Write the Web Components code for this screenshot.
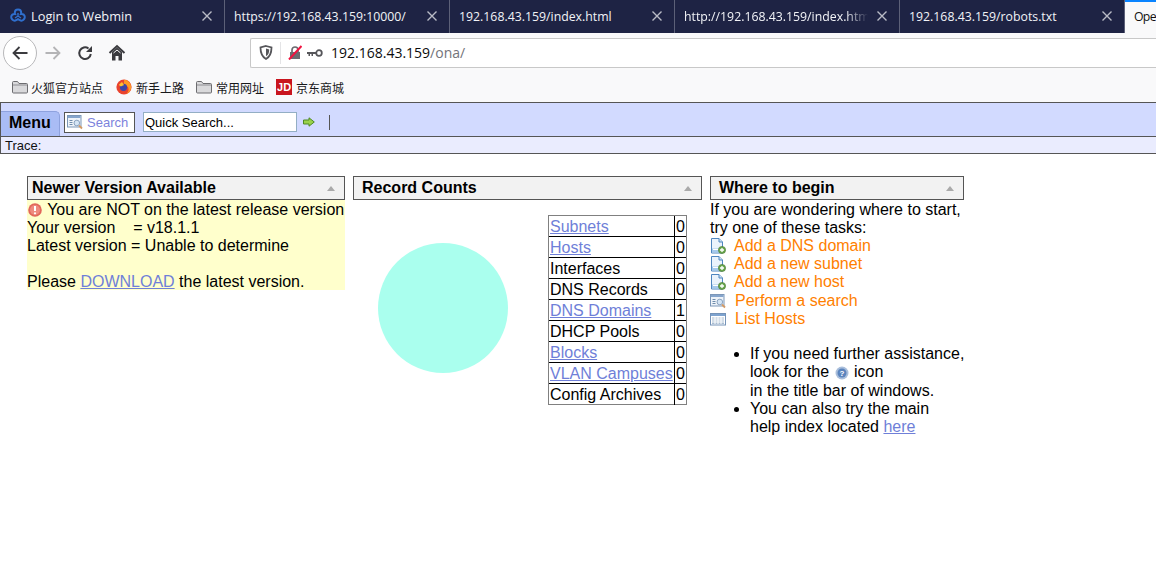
<!DOCTYPE html>
<html>
<head>
<meta charset="utf-8">
<title>OpenNetAdmin</title>
<style>
  html, body { margin: 0; padding: 0; background: #fff; overflow: hidden; }
  body { font-family: "Liberation Sans", Arial, sans-serif; font-size: 16px; color: #000; }
  .panels { display: flex; gap: 8px; padding: 22px 0 0 27px; align-items: flex-start; }
</style>
</head>
<body>
<browser-tabs>
  <browser-tab icon>Login to Webmin</browser-tab>
  <browser-tab>https://192.168.43.159:10000/</browser-tab>
  <browser-tab>192.168.43.159/index.html</browser-tab>
  <browser-tab fade>http://192.168.43.159/index.html</browser-tab>
  <browser-tab>192.168.43.159/robots.txt</browser-tab>
  <browser-tab active>Ope</browser-tab>
</browser-tabs>
<nav-bar></nav-bar>
<bookmark-bar></bookmark-bar>
<ona-menubar></ona-menubar>
<ona-trace></ona-trace>
<div class="panels">
  <ona-panel title="Newer Version Available" width="318" pad="5"><version-box></version-box></ona-panel>
  <ona-panel title="Record Counts" width="349" pad="9"><record-counts></record-counts></ona-panel>
  <ona-panel title="Where to begin" width="254" pad="9"><where-begin></where-begin></ona-panel>
</div>

<script>
const SEARCH_ICON = `<svg width="16" height="16" viewBox="0 0 16 16"><rect x=".5" y="1.500" width="13.500" height="11.500" fill="#eef3f9" stroke="#7c97b8"/><rect x="1" y="2" width="12.500" height="2" fill="#86a5cc"/><path d="M2.500 6.500h3M2.500 8.500h3M2.500 10.500h3" stroke="#6f8cab"/><circle cx="9.800" cy="9" r="2.800" fill="#d5e5f5" stroke="#8aa3bf"/><path d="M12 11.500l3 3" stroke="#d29a66" stroke-width="1.800"/></svg>`;
const ADD_ICON = `<svg width="16" height="16" viewBox="0 0 16 16"><path d="M1.500.5h7.500l3.500 3.500v11h-11z" fill="#eaf3fc" stroke="#4f86c0"/><path d="M2 10.500h10v4h-10z" fill="#a5c9ec"/><path d="M3 11.500h6" stroke="#fff"/><path d="M9 .5v3.500h3.500" fill="#cfe2f5" stroke="#4f86c0"/><circle cx="12" cy="12" r="3.600" fill="#6aa84f" stroke="#47762f" stroke-width=".6"/><path d="M10 12h4M12 10v4" stroke="#fff" stroke-width="1.300"/></svg>`;
const LIST_ICON = `<svg width="16" height="16" viewBox="0 0 16 16"><rect x=".5" y="2.500" width="15" height="11.500" fill="#fff" stroke="#7493b8"/><rect x="1" y="3" width="14" height="2" fill="#7ea3cf"/><path d="M2 7h12M2 9h12M2 11h12M2 12.500h12" stroke="#9db4cc" stroke-width=".9"/><path d="M5 6v7M8 6v7M11 6v7" stroke="#fff"/></svg>`;

class BrowserTabs extends HTMLElement {
  constructor() {
    super();
    this.attachShadow({ mode: 'open' }).innerHTML = `
    <style>
      :host { display: flex; height: 33px; background: #1e2344; overflow: hidden; }
    </style>
    <slot></slot>`;
  }
}

class BrowserTab extends HTMLElement {
  constructor() {
    super();
    const icon = this.hasAttribute('icon') ? `<svg class="fav" width="16" height="17" viewBox="0 0 16 17"><path d="M8 1.500c2 0 3.200 1.500 3.200 3.300 0 .5 0 .8-.2 1.200 2-.3 3.800 1 3.800 3 0 1.200-.4 2-1.300 2.800-1 .9-2.600 1-3.700.4L8 11.200l-1.800 1c-1.100.6-2.700.5-3.700-.4C1.600 11 1.200 10.200 1.200 9c0-2 1.800-3.300 3.800-3-.2-.4-.2-.7-.2-1.200C4.800 3 6 1.500 8 1.500z" fill="none" stroke="#2f6fce" stroke-width="2"/><path d="M8 5v4M5 10l3-2 3 2" fill="none" stroke="#2f6fce" stroke-width="1.400"/></svg>` : '';
    this.attachShadow({ mode: 'open' }).innerHTML = `
    <style>
      :host { display: flex; box-sizing: border-box; width: 225px; flex: none; height: 33px; align-items: center; padding: 0 11px 1px 9px; color: #f2f3f7; font: 12.300px "Open Sans", "Noto Sans", sans-serif; border-right: 1px solid #5c6078; }
      :host([icon]) { font-size: 12.800px; padding-left: 10px; }
      :host([active]) { width: 31px; background: #f9f9fa; color: #111; border-right: 0; border-top: 2px solid #0a84ff; padding: 0 0 3px 9px; letter-spacing: -.7px; }
      .fav { margin-right: 5px; flex: none; }
      .label { flex: 1; white-space: nowrap; overflow: hidden; min-width: 0; }
      :host([fade]) .label { -webkit-mask-image: linear-gradient(to right, #000 88%, transparent); mask-image: linear-gradient(to right, #000 88%, transparent); }
      svg.x { flex: none; margin-left: 8px; }
      :host([active]) svg.x { display: none; }
    </style>
    ${icon}<span class="label"><slot></slot></span>
    <svg class="x" width="12" height="12" viewBox="0 0 12 12"><path d="M1.500 1.500l9 9M10.500 1.500l-9 9" stroke="#b9bbc6" stroke-width="1.400"/></svg>`;
  }
}

class NavBar extends HTMLElement {
  constructor() {
    super();
    this.attachShadow({ mode: 'open' }).innerHTML = `
    <style>
      :host { display: flex; align-items: center; height: 39px; box-sizing: border-box; background: #f9f9fa; padding: 1px 0 0 3px; }
      .back { width: 34px; height: 34px; box-sizing: border-box; border: 1px solid #b8b8ba; border-radius: 50%; background: #fff; display: flex; align-items: center; justify-content: center; flex: none; }
      .btn { width: 32px; display: flex; justify-content: center; flex: none; }
      .url { margin-left: 117px; flex: 1; height: 30px; box-sizing: border-box; background: #fff; border: 1px solid #c8c8c8; border-right: 0; display: flex; align-items: center; padding: 0 0 1px 8px; font: 14px "Open Sans", "Noto Sans", sans-serif; color: #0c0c0d; border-radius: 2px 0 0 2px; }
      .sep { width: 1px; height: 22px; background: #e4e4e6; margin: 0 7px; }
      .path { color: #73737a; }
      .key { margin: 0 8px 0 5px; }
    </style>
    <div class="back"><svg width="18" height="18" viewBox="0 0 18 18"><path d="M16.500 9H2.500M8.500 3L2.500 9l6 6" fill="none" stroke="#3b3b3f" stroke-width="1.800"/></svg></div>
    <div class="btn"><svg width="18" height="18" viewBox="0 0 18 18"><path d="M1.500 9h14M9.500 3l6 6-6 6" fill="none" stroke="#b4b4b6" stroke-width="1.800"/></svg></div>
    <div class="btn"><svg width="16" height="16" viewBox="0 0 16 16"><path d="M13.800 9a5.800 5.800 0 1 1-2.300-5.500" fill="none" stroke="#3b3b3f" stroke-width="2"/><path d="M15 1v6h-6z" fill="#3b3b3f"/></svg></div>
    <div class="btn"><svg width="18" height="18" viewBox="0 0 18 18"><path d="M1.500 9L9 2l7.500 7" fill="none" stroke="#3b3b3f" stroke-width="2"/><path d="M4 8l5-4.500L14 8v8.500h-3.500V12h-3v4.500H4z" fill="#3b3b3f"/><path d="M5.500 9L9 6l3.500 3" fill="none" stroke="#f9f9fa" stroke-width="1"/></svg></div>
    <div class="url">
      <svg width="14" height="15" viewBox="0 0 14 15"><path d="M7 1l5.500 1.500c0 5-1 9-5.500 11.500C2.500 11.500 1.500 7.500 1.500 2.500z" fill="none" stroke="#56565a" stroke-width="1.800"/><path d="M7 3.500l3.200.9c0 3-.7 5.200-3.200 6.900z" fill="#56565a"/></svg>
      <span class="sep"></span>
      <svg width="14" height="15" viewBox="0 0 14 15"><path d="M2 7h10v7H2z" fill="#6b6b70"/><path d="M4 7V5a3 3 0 0 1 6 0v2" fill="none" stroke="#6b6b70" stroke-width="1.700"/><path d="M1 14.500L13.500 1" stroke="#f01440" stroke-width="2"/></svg>
      <svg class="key" width="16" height="10" viewBox="0 0 16 10"><circle cx="12" cy="5" r="2.800" fill="none" stroke="#56565a" stroke-width="1.800"/><path d="M0 4h9.500v2H6v2H4.500V6H3v2H1.500V6H0z" fill="#56565a"/></svg>
      <span>192.168.43.159<span class="path">/ona/</span></span>
    </div>`;
  }
}

class BookmarkBar extends HTMLElement {
  constructor() {
    super();
    const folder = `<svg width="16" height="14" viewBox="0 0 16 14"><path d="M.5 2.500a1 1 0 0 1 1-1h4l1.500 2h7.500a1 1 0 0 1 1 1v7.500a1 1 0 0 1-1 1h-13a1 1 0 0 1-1-1z" fill="#d9d9db" stroke="#6d6d70"/><path d="M1 5h14" stroke="#8e8e92"/></svg>`;
    this.attachShadow({ mode: 'open' }).innerHTML = `
    <style>
      :host { display: flex; align-items: center; height: 30px; box-sizing: border-box; background: #f9f9fa; padding: 0 0 0 12px; font: 12px "Noto Sans CJK SC", "Noto Sans", sans-serif; color: #18181a; }
      .b { display: flex; align-items: center; gap: 4px; margin-right: 12px; white-space: nowrap; }
      .b.first { gap: 3px; margin-right: 13px; }
      .jd { width: 16px; height: 16px; background: #c9151e; color: #fff; font: bold 11px "Liberation Sans", sans-serif; display: flex; align-items: center; justify-content: center; }
    </style>
    <div class="b first">${folder}<span>火狐官方站点</span></div>
    <div class="b"><svg width="16" height="16" viewBox="0 0 16 16"><circle cx="8" cy="8" r="7.600" fill="#e9432e"/><path d="M8 .8a7.200 7.200 0 0 1 7.200 7.200c0 3-2 6-5 7 2-2 3-4 2-6.500-1-2-3-2.500-5-2.300 1-2.500 1-4 .8-5.400z" fill="#ff9a24"/><circle cx="7.500" cy="8.300" r="3.600" fill="#3b46a8"/><path d="M3 5.500c1 3 3 1.500 5 .5l-2-3z" fill="#ffc02e"/></svg><span>新手上路</span></div>
    <div class="b">${folder}<span>常用网址</span></div>
    <div class="b"><span class="jd">JD</span><span>京东商城</span></div>`;
  }
}

class OnaMenubar extends HTMLElement {
  constructor() {
    super();
    this.attachShadow({ mode: 'open' }).innerHTML = `
    <style>
      :host { display: flex; align-items: flex-end; box-sizing: border-box; height: 35px; background: #d2daff; border-top: 1px solid #555; border-left: 1px solid #555; border-bottom: 1px solid #555; }
      .menu { box-sizing: border-box; width: 59px; height: 25px; background: #a9bcf5; border: 1px solid #8ea2de; border-bottom: 0; border-left: 0; border-radius: 0 5px 0 0; font: bold 16px "Liberation Sans", sans-serif; padding: 2px 0 0 8px; }
      .row { display: flex; align-items: center; align-self: center; margin-top: 5px; }
      .search { box-sizing: border-box; width: 71px; height: 21px; margin-left: 4px; background: #fff; border: 1px solid #555; display: flex; align-items: center; padding-left: 2px; gap: 4px; font: 13px "Liberation Sans", sans-serif; color: #7c82dc; }
      .q { box-sizing: border-box; width: 154px; height: 20px; margin-left: 8px; background: #fff; border: 1px solid #93aec4; font: 13px/17px "Liberation Sans", sans-serif; padding: 1px 0 0 1px; }
      .go { margin-left: 6px; }
      .bar { width: 1px; height: 15px; background: #555; margin-left: 14px; }
    </style>
    <div class="menu">Menu</div>
    <div class="row">
      <div class="search">${SEARCH_ICON}<span>Search</span></div>
      <div class="q">Quick Search...</div>
      <svg class="go" width="12" height="10" viewBox="0 0 12 10"><path d="M.5 3h5.500V.8L11.300 5 6 9.200V7H.5z" fill="#9ad24a" stroke="#4f8a22"/></svg>
      <div class="bar"></div>
    </div>`;
  }
}

class OnaTrace extends HTMLElement {
  constructor() {
    super();
    this.attachShadow({ mode: 'open' }).innerHTML = `
    <style>
      :host { display: block; box-sizing: border-box; height: 17px; background: #eaecfe; border-left: 1px solid #555; border-bottom: 1px solid #555; font: 13px/17px "Liberation Sans", sans-serif; padding-left: 4px; color: #111; }
    </style>Trace:`;
  }
}

class OnaPanel extends HTMLElement {
  constructor() {
    super();
    this.attachShadow({ mode: 'open' }).innerHTML = `
    <style>
      :host { display: block; flex: none; }
      .head { box-sizing: border-box; height: 24px; background: #f2f2f2; border: 1px solid #555; display: flex; align-items: center; justify-content: space-between; font: bold 16px "Liberation Sans", sans-serif; padding-right: 9px; }
      .tri { width: 0; height: 0; border: 4px solid transparent; border-top: 0; border-bottom: 5px solid #aaa; }
    </style>
    <div class="head"><span class="t"></span><span class="tri"></span></div>
    <slot></slot>`;
  }
  connectedCallback() {
    this.style.width = this.getAttribute('width') + 'px';
    this.shadowRoot.querySelector('.t').textContent = this.getAttribute('title');
    this.shadowRoot.querySelector('.head').style.paddingLeft = (this.getAttribute('pad') - 1) + 'px';
    this.removeAttribute('title');
  }
}

class VersionBox extends HTMLElement {
  constructor() {
    super();
    this.attachShadow({ mode: 'open' }).innerHTML = `
    <style>
      :host { display: block; box-sizing: border-box; background: #ffffcc; font: 16px/18px "Liberation Sans", sans-serif; height: 90px; padding-top: 1px; }
      .txt { white-space: pre; }
      a { color: #6f7fd8; }
      svg { vertical-align: -2px; margin: 0 1px 0 1px; }
    </style>
    <div class="txt"><svg width="14" height="14" viewBox="0 0 14 14"><circle cx="7" cy="7" r="6.800" fill="#e2675a"/><circle cx="7" cy="7" r="5" fill="#ee8a7e"/><path d="M7 3v5" stroke="#fff" stroke-width="2"/><circle cx="7" cy="10.300" r="1.100" fill="#fff"/></svg> You are NOT on the latest release version
Your version    = v18.1.1
Latest version = Unable to determine

Please <a href="#">DOWNLOAD</a> the latest version.</div>`;
  }
}

class RecordCounts extends HTMLElement {
  constructor() {
    super();
    const rows = [
      ['Subnets', 0, 1], ['Hosts', 0, 1], ['Interfaces', 0, 0], ['DNS Records', 0, 0], ['DNS Domains', 1, 1],
      ['DHCP Pools', 0, 0], ['Blocks', 0, 1], ['VLAN Campuses', 0, 1], ['Config Archives', 0, 0]
    ];
    const html = rows.map(r => `<div class="n">${r[2] ? `<a href="#">${r[0]}</a>` : r[0]}</div><div class="c">${r[1]}</div>`).join('');
    this.attachShadow({ mode: 'open' }).innerHTML = `
    <style>
      :host { display: flex; align-items: flex-start; padding: 15px 0 0 25px; }
      svg { margin-top: 28px; flex: none; }
      .tbl { margin-left: 40px; display: grid; grid-template-columns: 126px 11px; grid-auto-rows: 21px; box-sizing: border-box; width: 139px; height: 190px; border: 1px solid #808080; font: 16px/20px "Liberation Sans", sans-serif; }
      .n, .c { box-sizing: border-box; border-bottom: 1px solid #000; white-space: nowrap; padding-top: 1px; }
      .n { padding-left: 1px; border-right: 1px solid #000; }
      .c { padding-left: 1px; }
      .n:nth-last-child(2), .c:last-child { border-bottom: 0; }
      a { color: #6f7fd8; }
    </style>
    <svg width="130" height="130" viewBox="0 0 130 130"><circle cx="65" cy="65" r="65" fill="#aaffee"/></svg>
    <div class="tbl">${html}</div>`;
  }
}

class WhereBegin extends HTMLElement {
  constructor() {
    super();
    const tasks = [
      [ADD_ICON, 'Add a DNS domain', ''], [ADD_ICON, 'Add a new subnet', ''], [ADD_ICON, 'Add a new host', ''],
      [SEARCH_ICON, 'Perform a search', 'wide'], [LIST_ICON, 'List Hosts', '']
    ];
    const html = tasks.map(t => `<div class="task ${t[2]}">${t[0]}<span>${t[1]}</span></div>`).join('');
    this.attachShadow({ mode: 'open' }).innerHTML = `
    <style>
      :host { display: block; font: 16px/18px "Liberation Sans", sans-serif; padding-top: 1px; }
      .task { display: flex; align-items: center; height: 18px; color: #ff8000; gap: 8px; }
      .task.wide { margin-top: 1px; }
      .task.wide, .task.wide + .task { gap: 9px; }
      ul { margin: 17px 0 0; padding: 0 0 0 40px; white-space: nowrap; }
      a { color: #6f7fd8; }
      .help { vertical-align: -5px; margin: 0 1px 2px; }
    </style>
    If you are wondering where to start,<br>try one of these tasks:
    ${html}
    <ul>
      <li>If you need further assistance,<br>look for the <svg class="help" width="14" height="14" viewBox="0 0 14 14"><circle cx="7" cy="7" r="6.500" fill="#a9bedb"/><circle cx="7" cy="7" r="4.500" fill="#5b84bd"/><text x="7" y="10" font-size="8" font-weight="bold" font-family="Liberation Sans" text-anchor="middle" fill="#fff">?</text></svg> icon<br>in the title bar of windows.</li>
      <li>You can also try the main<br>help index located <a href="#">here</a></li>
    </ul>`;
  }
}

customElements.define('browser-tabs', BrowserTabs);
customElements.define('browser-tab', BrowserTab);
customElements.define('nav-bar', NavBar);
customElements.define('bookmark-bar', BookmarkBar);
customElements.define('ona-menubar', OnaMenubar);
customElements.define('ona-trace', OnaTrace);
customElements.define('ona-panel', OnaPanel);
customElements.define('version-box', VersionBox);
customElements.define('record-counts', RecordCounts);
customElements.define('where-begin', WhereBegin);
</script>
</body>
</html>
